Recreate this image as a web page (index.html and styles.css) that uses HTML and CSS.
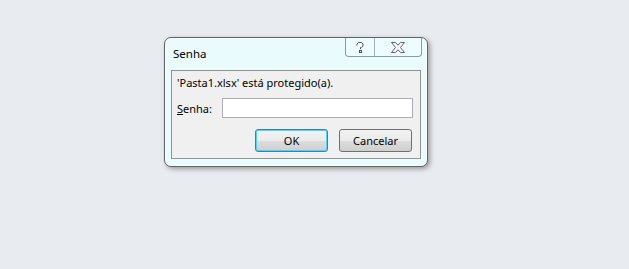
FILE: index.html
```html
<!DOCTYPE html>
<html lang="pt">
<head>
<meta charset="utf-8">
<title>Senha</title>
<link rel="stylesheet" href="styles.css">
</head>
<body>
<div class="desk">
  <div class="dialog">
    <div class="titlebar">
      <span class="title">Senha</span>
      <div class="caption-btns">
        <span class="cbtn help">
          <svg width="10" height="12" viewBox="0 0 10 12"><path d="M2 4.5 V3 L3.5 1.5 H6.5 L8 3 V5 L6.5 6.5 H5.5 V8 M3.5 1.5" fill="none" stroke="#4a4f57" stroke-width="1"/><rect x="4.5" y="9.5" width="2" height="2" fill="none" stroke="#4a4f57" stroke-width="1"/></svg>
        </span>
        <span class="cbtn close">
          <svg width="14" height="11" viewBox="0 0 14 11"><path d="M0.5 0.5 H4.5 L7 3.2 L9.5 0.5 H13.5 L9.5 5.5 L13.5 10.5 H9.5 L7 7.8 L4.5 10.5 H0.5 L4.5 5.5 Z" fill="#f4f8f9" stroke="#5c646c" stroke-width="1" stroke-linejoin="round"/></svg>
        </span>
      </div>
    </div>
    <div class="panel">
      <p class="msg">'Pasta1.xlsx' está protegido(a).</p>
      <div class="field">
        <label class="lbl" for="pw"><u>S</u>enha:</label>
        <input class="input" id="pw" type="password">
      </div>
      <div class="actions">
        <button class="btn default">OK</button>
        <button class="btn">Cancelar</button>
      </div>
    </div>
  </div>
</div>
</body>
</html>
```

FILE: styles.css
```css
html, body {
  margin: 0;
  padding: 0;
}
body {
  background: #e8ebef;
  width: 629px;
  height: 269px;
  overflow: hidden;
  font-family: "Noto Sans", "Open Sans", sans-serif;
  font-size: 11px;
  color: #000;
}
.desk {
  padding: 37px 0 0 164px;
}
.dialog {
  width: 264px;
  height: 130px;
  box-sizing: border-box;
  border: 1px solid #5f6468;
  border-radius: 7px;
  background: #e9fbfd;
  box-shadow: inset 0 0 0 1px #f6feff, 2px 2px 5px rgba(0, 0, 0, 0.35);
  padding: 0 6px 0 6px;
  display: flex;
  flex-direction: column;
}
.titlebar {
  height: 32px;
  display: flex;
  align-items: flex-start;
  justify-content: space-between;
}
.title {
  margin: 8px 0 0 2px;
  line-height: 16px;
  font-size: 11.5px;
  color: #000;
}
.caption-btns {
  display: flex;
  height: 18px;
  margin-right: -1px;
  border: 1px solid #8e9aa2;
  border-top: none;
  border-radius: 0 0 4px 4px;
  background: #edfcfe;
}
.cbtn {
  display: flex;
  align-items: center;
  justify-content: center;
}
.help {
  width: 28px;
  border-right: 1px solid #a7b3ba;
}
.close {
  width: 46px;
}
.panel {
  height: 89px;
  box-sizing: border-box;
  border: 1px solid #8f9396;
  background: #f0f0f0;
  padding: 0 7px 0 5px;
  display: flex;
  flex-direction: column;
}
.msg {
  margin: 4px 0 0 0;
  line-height: 16px;
  height: 16px;
}
.field {
  display: flex;
  align-items: center;
  margin-top: 7px;
  height: 20px;
}
.lbl {
  width: 45px;
}
.input {
  width: 193px;
  height: 20px;
  box-sizing: border-box;
  border: 1px solid #abadb3;
  background: #fff;
  margin: 0;
  padding: 0;
}
.actions {
  display: flex;
  justify-content: flex-end;
  gap: 11px;
  margin-top: 11px;
  padding-right: 1px;
}
.btn {
  width: 73px;
  height: 23px;
  box-sizing: border-box;
  border: 1px solid #707070;
  border-radius: 3px;
  background: linear-gradient(#f2f2f2 0%, #ebebeb 50%, #dddddd 51%, #cfcfcf 100%);
  font-family: "Noto Sans", "Open Sans", sans-serif;
  font-size: 11px;
  color: #000;
  padding: 0;
  margin: 0;
}
.btn.default {
  border-color: #3c7fb1;
  box-shadow: inset 0 0 0 1px #48d6f9;
}
```
